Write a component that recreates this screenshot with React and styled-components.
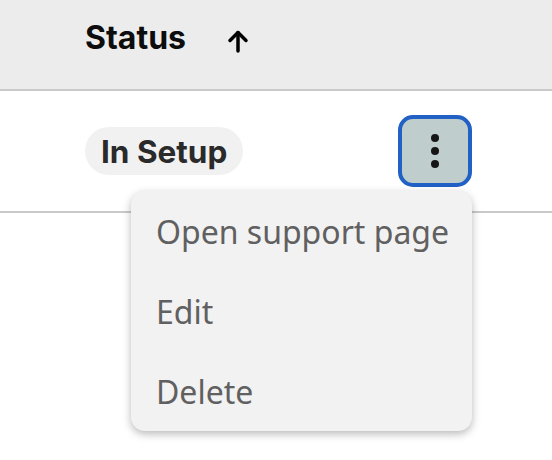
import React from "react";
import styled, { createGlobalStyle } from "styled-components";

const Global = createGlobalStyle`
  html, body { margin: 0; padding: 0; background: #ffffff; }
  body { font-family: Inter, "Liberation Sans", sans-serif; }
`;

const Table = styled.div`
  width: 552px;
  height: 460px;
  background: #ffffff;
  overflow: hidden;
`;

const HeaderRow = styled.div`
  box-sizing: border-box;
  height: 91px;
  display: flex;
  align-items: flex-start;
  padding: 18px 80px 0 85px;
  background: #ececec;
  border-bottom: 2px solid #c9c9c9;
`;

const HeaderLabel = styled.span`
  font-family: Inter, "Liberation Sans", sans-serif;
  font-weight: 700;
  font-size: 32px;
  line-height: normal;
  color: #0d0d0d;
`;

const SortIcon = styled.svg`
  width: 22px;
  height: 23px;
  margin-left: 41px;
  margin-top: 12px;
`;

const BodyRow = styled.div`
  height: 120px;
  display: flex;
  align-items: center;
  justify-content: space-between;
  padding: 0 80px 0 85px;
  border-bottom: 2px solid #c9c9c9;
`;

const Pill = styled.span`
  display: inline-flex;
  align-items: center;
  height: 48px;
  padding: 0 16px 0 16px;
  border-radius: 24px;
  background: #f1f1f1;
  font-family: Inter, "Liberation Sans", sans-serif;
  font-weight: 700;
  font-size: 31.5px;
  color: #2a2a2a;
`;

const ActionCell = styled.div`
  position: relative;
`;

const MenuButton = styled.button`
  box-sizing: border-box;
  width: 74px;
  height: 72px;
  border: 4px solid #2160c4;
  border-radius: 15px;
  background: #c0cdcd;
  display: flex;
  flex-direction: column;
  align-items: center;
  justify-content: center;
  gap: 5px;
  padding: 0;
  cursor: pointer;
`;

const Dot = styled.span`
  width: 8px;
  height: 8px;
  border-radius: 50%;
  background: #161616;
`;

const Menu = styled.ul`
  position: absolute;
  top: 76px;
  right: 0;
  width: 341px;
  margin: 0;
  padding: 0;
  list-style: none;
  background: #f2f2f2;
  border-radius: 14px;
  box-shadow: 0 3px 9px rgba(0, 0, 0, 0.28);
  z-index: 2;
`;

const MenuItem = styled.li`
  height: 80px;
  display: flex;
  align-items: center;
  padding-left: 25px;
  font-family: "Noto Sans", "Open Sans", sans-serif;
  font-size: 32px;
  color: #606060;
`;

export default function App() {
  return (
    <>
      <Global />
      <Table>
        <HeaderRow>
          <HeaderLabel>Status</HeaderLabel>
          <SortIcon viewBox="0 0 22 23" fill="none" stroke="#000" strokeWidth="3.5" strokeLinecap="round" strokeLinejoin="round">
            <path d="M11 21V2.5" />
            <path d="M3 10.5L11 2.5l8 8" />
          </SortIcon>
        </HeaderRow>
        <BodyRow>
          <Pill>In Setup</Pill>
          <ActionCell>
            <MenuButton aria-label="More actions">
              <Dot />
              <Dot />
              <Dot />
            </MenuButton>
            <Menu>
              <MenuItem>Open support page</MenuItem>
              <MenuItem>Edit</MenuItem>
              <MenuItem>Delete</MenuItem>
            </Menu>
          </ActionCell>
        </BodyRow>
      </Table>
    </>
  );
}
